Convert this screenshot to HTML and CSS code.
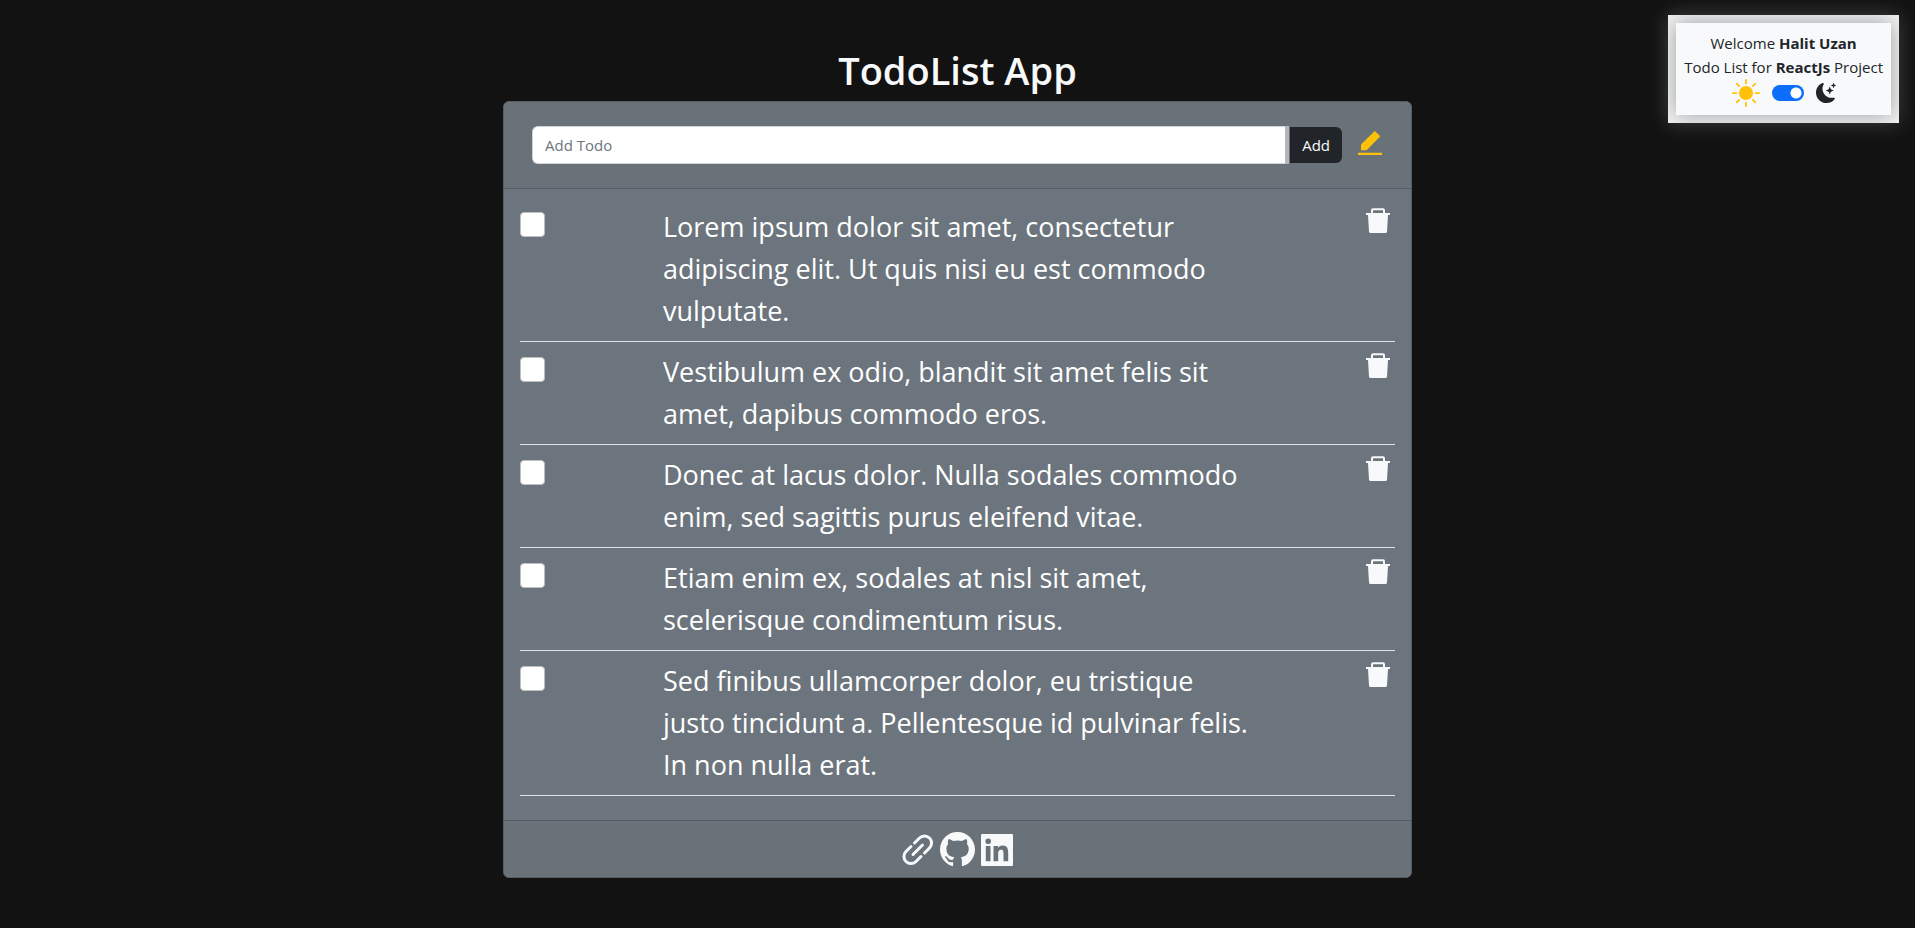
FILE: index.html
```html
<!DOCTYPE html>
<html lang="en">
<head>
<meta charset="utf-8">
<meta name="viewport" content="width=device-width, initial-scale=1">
<title>TodoList App</title>
<link rel="stylesheet" href="styles.css">
</head>
<body>
<svg class="sprite" aria-hidden="true">
  <symbol id="trash" viewBox="0 0 24 25">
    <path d="M5 5V2.200Q5 .2 7 .2h10q2 0 2 2V5h5v2h-2l-1 16.500Q20.900 25 19.500 25h-15Q3.100 25 3 23.500L2 7H0V5zm2 0h10V2.200H7z" fill-rule="evenodd"/>
  </symbol>
</svg>

<aside class="welcome">
  <div class="welcome-body">
    <p>Welcome <strong>Halit Uzan</strong></p>
    <p>Todo List for <strong>ReactJs</strong> Project</p>
    <div class="theme">
      <svg class="sun" viewBox="0 0 16 16" aria-hidden="true"><path d="M8 12a4 4 0 1 0 0-8 4 4 0 0 0 0 8M8 0a.5.5 0 0 1 .5.5v2a.5.5 0 0 1-1 0v-2A.5.5 0 0 1 8 0m0 13a.5.5 0 0 1 .5.5v2a.5.5 0 0 1-1 0v-2A.5.5 0 0 1 8 13m8-5a.5.5 0 0 1-.5.5h-2a.5.5 0 0 1 0-1h2a.5.5 0 0 1 .5.5M3 8a.5.5 0 0 1-.5.5h-2a.5.5 0 0 1 0-1h2A.5.5 0 0 1 3 8m10.657-5.657a.5.5 0 0 1 0 .707l-1.414 1.415a.5.5 0 1 1-.707-.708l1.414-1.414a.5.5 0 0 1 .707 0m-9.193 9.193a.5.5 0 0 1 0 .707L3.050 13.657a.5.5 0 0 1-.707-.707l1.414-1.414a.5.5 0 0 1 .707 0m9.193 2.121a.5.5 0 0 1-.707 0l-1.414-1.414a.5.5 0 0 1 .707-.707l1.414 1.414a.5.5 0 0 1 0 .707M4.464 4.465a.5.5 0 0 1-.707 0L2.343 3.050a.5.5 0 1 1 .707-.707l1.414 1.414a.5.5 0 0 1 0 .708"/></svg>
      <input class="switch" type="checkbox" role="switch" aria-label="Dark theme" checked>
      <svg class="moon" viewBox="0 0 16 16" aria-hidden="true"><path d="M6 .278a.770.770 0 0 1 .080.858 7.200 7.200 0 0 0-.878 3.460c0 4.021 3.278 7.277 7.318 7.277q.792-.001 1.533-.160a.790.790 0 0 1 .810.316.730.730 0 0 1-.031.893A8.350 8.350 0 0 1 8.344 16C3.734 16 0 12.286 0 7.710 0 4.266 2.114 1.312 5.124.060A.750.750 0 0 1 6 .278"/><path d="M10.794 3.148a.217.217 0 0 1 .412 0l.387 1.162c.173.518.579.924 1.097 1.097l1.162.387a.217.217 0 0 1 0 .412l-1.162.387a1.730 1.730 0 0 0-1.097 1.097l-.387 1.162a.217.217 0 0 1-.412 0l-.387-1.162A1.730 1.730 0 0 0 9.310 6.593l-1.162-.387a.217.217 0 0 1 0-.412l1.162-.387a1.730 1.730 0 0 0 1.097-1.097zM13.863.099a.145.145 0 0 1 .274 0l.258.774c.115.346.386.617.732.732l.774.258a.145.145 0 0 1 0 .274l-.774.258a1.160 1.160 0 0 0-.732.732l-.258.774a.145.145 0 0 1-.274 0l-.258-.774a1.160 1.160 0 0 0-.732-.732l-.774-.258a.145.145 0 0 1 0-.274l.774-.258c.346-.115.617-.386.732-.732z"/></svg>
    </div>
  </div>
</aside>

<main class="page">
  <h1>TodoList App</h1>
  <section class="card">
    <form class="card-header">
      <div class="group">
        <input class="field" type="text" placeholder="Add Todo" aria-label="Add Todo">
        <div class="addon"><button class="add" type="button">Add</button></div>
      </div>
      <button class="icon-btn edit" type="button" aria-label="Edit">
        <svg viewBox="0 0 24 24" aria-hidden="true"><path d="M0 21.700h24V24H0zM3 19.200v-5.600L16.800 0 22.300 5.200 8.600 19.200z"/></svg>
      </button>
    </form>
    <ul class="list">
      <li>
        <input class="check" type="checkbox" id="t1">
        <label for="t1">Lorem ipsum dolor sit amet, consectetur adipiscing elit. Ut quis nisi eu est commodo vulputate.</label>
        <button class="icon-btn trash" type="button" aria-label="Delete"><svg aria-hidden="true"><use href="#trash"/></svg></button>
      </li>
      <li>
        <input class="check" type="checkbox" id="t2">
        <label for="t2">Vestibulum ex odio, blandit sit amet felis sit amet, dapibus commodo eros.</label>
        <button class="icon-btn trash" type="button" aria-label="Delete"><svg aria-hidden="true"><use href="#trash"/></svg></button>
      </li>
      <li>
        <input class="check" type="checkbox" id="t3">
        <label for="t3">Donec at lacus dolor. Nulla sodales commodo enim, sed sagittis purus eleifend vitae.</label>
        <button class="icon-btn trash" type="button" aria-label="Delete"><svg aria-hidden="true"><use href="#trash"/></svg></button>
      </li>
      <li>
        <input class="check" type="checkbox" id="t4">
        <label for="t4">Etiam enim ex, sodales at nisl sit amet, scelerisque condimentum risus.</label>
        <button class="icon-btn trash" type="button" aria-label="Delete"><svg aria-hidden="true"><use href="#trash"/></svg></button>
      </li>
      <li>
        <input class="check" type="checkbox" id="t5">
        <label for="t5">Sed finibus ullamcorper dolor, eu tristique justo tincidunt a. Pellentesque id pulvinar felis. In non nulla erat.</label>
        <button class="icon-btn trash" type="button" aria-label="Delete"><svg aria-hidden="true"><use href="#trash"/></svg></button>
      </li>
    </ul>
    <footer class="card-footer">
      <a href="#" aria-label="Website"><svg class="link" viewBox="0 0 32 32" aria-hidden="true"><path d="M12.500 9 17.500 4a7 7 0 0 1 10 10L22.500 19M9 12.500 4 17.500a7 7 0 0 0 10 10L19 22.500M11 20.500l9.500-9.500"/></svg></a>
      <a href="#" aria-label="GitHub"><svg class="github" viewBox="0 0 16 16" aria-hidden="true"><path d="M8 0C3.580 0 0 3.580 0 8c0 3.540 2.290 6.530 5.470 7.590.4.070.550-.170.550-.380 0-.190-.010-.820-.010-1.490-2.010.370-2.530-.490-2.690-.940-.090-.230-.480-.940-.820-1.130-.280-.150-.680-.520-.010-.530.630-.010 1.080.580 1.230.820.720 1.210 1.870.870 2.330.660.070-.520.280-.870.510-1.070-1.780-.2-3.640-.890-3.640-3.950 0-.870.310-1.590.820-2.150-.080-.2-.360-1.020.080-2.120 0 0 .670-.210 2.200.820.640-.180 1.320-.270 2-.270s1.360.090 2 .270c1.530-1.040 2.200-.820 2.200-.820.440 1.100.160 1.920.080 2.120.510.560.820 1.270.820 2.150 0 3.070-1.870 3.750-3.650 3.950.290.250.540.730.540 1.480 0 1.070-.010 1.930-.010 2.200 0 .210.150.460.550.380A8.010 8.010 0 0 0 16 8c0-4.420-3.580-8-8-8"/></svg></a>
      <a href="#" aria-label="LinkedIn"><svg class="linkedin" viewBox="0 0 32 32" aria-hidden="true"><path d="M1.200 0h29.600Q32 0 32 1.200v29.600q0 1.200-1.200 1.200H1.200Q0 32 0 30.800V1.200Q0 0 1.200 0zM4.800 12v15.200h4.700V12zM7.200 4.400a2.800 2.800 0 1 0 0 5.600 2.800 2.800 0 0 0 0-5.600zM12.500 12v15.200h4.700v-7.500c0-2 .5-3.900 2.900-3.900 2.300 0 2.400 2.200 2.400 4v7.400h4.700v-8.300c0-4.100-.9-7.300-5.700-7.300-2.300 0-3.800 1.200-4.500 2.500V12z" fill-rule="evenodd"/></svg></a>
    </footer>
  </section>
</main>
</body>
</html>
```
FILE: styles.css
```css
* { box-sizing: border-box; }

body {
  margin: 0;
  min-height: 100vh;
  background: #121212;
  color: #212529;
  font: 16px/24px "Open Sans", "Noto Sans", sans-serif;
}

h1, p, ul { margin: 0; padding: 0; }
svg { display: block; fill: currentColor; }
.sprite { position: absolute; width: 0; height: 0; }

.page {
  display: flex;
  flex-direction: column;
  align-items: center;
  padding: 46px 16px;
}

h1 {
  color: #f8f9fa;
  font-size: 38px;
  font-weight: 600;
  line-height: 48px;
  margin-bottom: 7px;
}

.welcome {
  position: absolute;
  top: 15px;
  right: 16px;
  padding: 8px;
  background: #f0f1f2;
  font-size: 15px;
  text-align: center;
  box-shadow: 0 0 20px rgba(255, 255, 255, .2);
}

.welcome-body {
  padding: 8px;
  background: #f8f9fa;
  box-shadow: 0 0 20px rgba(0, 0, 0, .35);
  clip-path: inset(-8px);
}

.theme {
  display: flex;
  align-items: center;
  justify-content: center;
  gap: 12px;
}

.sun { width: 28px; height: 28px; color: #ffc107; }
.moon { width: 20px; height: 20px; }

.switch {
  appearance: none;
  width: 32px;
  height: 16px;
  margin: 0;
  border-radius: 8px;
  background: radial-gradient(circle at 24px 8px, #fff 5px, transparent 6px) #0d6efd;
}

.card {
  width: 100%;
  max-width: 909px;
  border: 1px solid #565e64;
  border-radius: 6px;
  background: #6c757d;
  overflow: hidden;
}

.card-header {
  display: flex;
  align-items: center;
  gap: 16px;
  padding: 24px 29px 24px 28px;
  border-bottom: 1px solid #565e64;
  background: #6a7279;
}

.group { display: flex; flex: 1; }

.field {
  flex: 1;
  min-width: 0;
  height: 38px;
  padding: 0 12px;
  border: 1px solid #ced4da;
  border-right: 0;
  border-radius: 6px 0 0 6px;
  background: #fff;
  font: inherit;
  font-size: 15px;
}

.field::placeholder { color: #6c757d; opacity: 1; }

.addon {
  display: flex;
  align-items: center;
  border-left: 4px solid #b0b6bb;
}

.add {
  height: 36px;
  margin-left: 1px;
  padding: 0 12px;
  border: 0;
  border-radius: 0 6px 6px 0;
  background: #212529;
  color: #f8f9fa;
  font: inherit;
  font-size: 15px;
}

.icon-btn { padding: 0; border: 0; background: none; }
.edit { padding-bottom: 5px; color: #ffc107; }
.edit svg { width: 24px; height: 24px; }

.list { list-style: none; padding: 8px 16px 24px; }

.list li {
  display: grid;
  grid-template-columns: 143px minmax(0, 592px) 1fr;
  align-items: start;
  padding: 9px 0;
  border-bottom: 1px solid #dee2e6;
  color: #fff;
  font-size: 27px;
  line-height: 42px;
}

.check {
  appearance: none;
  width: 25px;
  height: 25px;
  margin: 6px 0 0;
  border: 1px solid #bfbfbf;
  border-radius: 4px;
  background: #fff;
}

.trash { justify-self: end; margin: 2px 5px 0 0; color: #f8f9fa; }
.trash svg { width: 24px; height: 25px; }

.card-footer {
  display: flex;
  align-items: center;
  justify-content: center;
  gap: 6px;
  padding: 11px 16px 10px;
  border-top: 1px solid #565e64;
  background: #6a7279;
}

.card-footer a { color: #f8f9fa; }
.link { width: 32px; height: 32px; fill: none; stroke: currentColor; stroke-width: 3; stroke-linecap: round; }
.github { width: 35px; height: 35px; }
.linkedin { width: 32px; height: 32px; }
```
